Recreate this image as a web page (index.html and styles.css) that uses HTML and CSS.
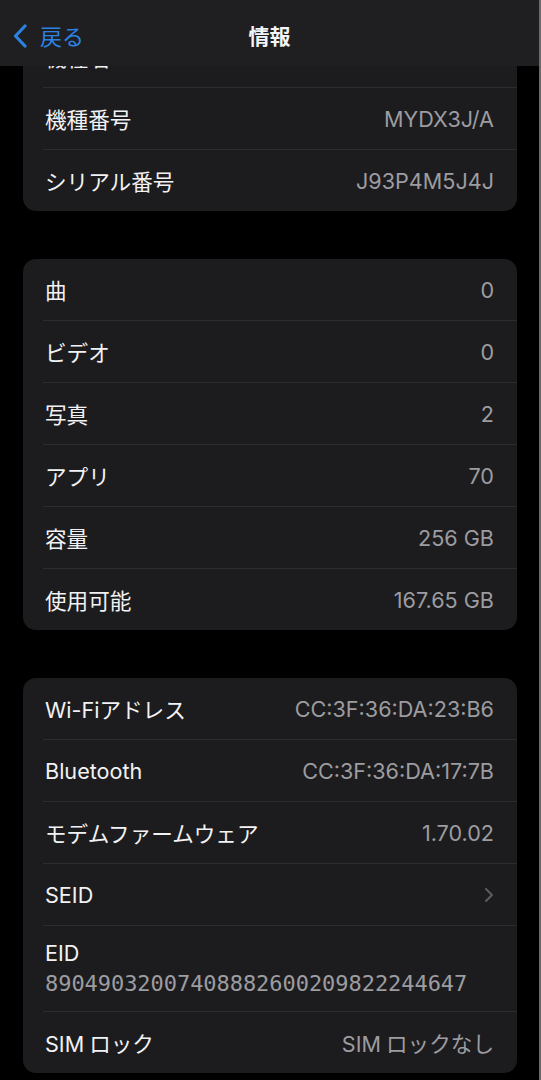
FILE: index.html
```html
<!DOCTYPE html>
<html lang="ja">
<head>
<meta charset="utf-8">
<title>情報</title>
<link rel="stylesheet" href="styles.css">
</head>
<body>
<div class="screen">
  <header class="navbar">
    <a class="back">
      <svg class="back-chevron" width="16" height="24" viewBox="0 0 16 24"><path d="M13 2 L3.5 12 L13 22" fill="none" stroke="currentColor" stroke-width="3.2" stroke-linecap="round" stroke-linejoin="round"/></svg>
      <span>戻る</span>
    </a>
    <div class="title">情報</div>
  </header>
  <main class="content">
    <section class="card">
      <div class="row"><span class="label">機種名</span><span class="value">iPhone 12</span></div>
      <div class="row"><span class="label">機種番号</span><span class="value">MYDX3J/A</span></div>
      <div class="row"><span class="label">シリアル番号</span><span class="value">J93P4M5J4J</span></div>
    </section>
    <section class="card">
      <div class="row"><span class="label">曲</span><span class="value">0</span></div>
      <div class="row"><span class="label">ビデオ</span><span class="value">0</span></div>
      <div class="row"><span class="label">写真</span><span class="value">2</span></div>
      <div class="row"><span class="label">アプリ</span><span class="value">70</span></div>
      <div class="row"><span class="label">容量</span><span class="value">256 GB</span></div>
      <div class="row"><span class="label">使用可能</span><span class="value">167.65 GB</span></div>
    </section>
    <section class="card">
      <div class="row"><span class="label">Wi-Fiアドレス</span><span class="value">CC:3F:36:DA:23:B6</span></div>
      <div class="row"><span class="label">Bluetooth</span><span class="value">CC:3F:36:DA:17:7B</span></div>
      <div class="row"><span class="label">モデムファームウェア</span><span class="value">1.70.02</span></div>
      <div class="row"><span class="label">SEID</span><svg class="chevron" width="10" height="16" viewBox="0 0 10 16"><path d="M2 2 L8 8 L2 14" fill="none" stroke="currentColor" stroke-width="2" stroke-linecap="round" stroke-linejoin="round"/></svg></div>
      <div class="row row-stack"><span class="label">EID</span><span class="mono">89049032007408882600209822244647</span></div>
      <div class="row"><span class="label"><span class="latin">SIM</span>ロック</span><span class="value"><span class="latin">SIM</span>ロックなし</span></div>
    </section>
  </main>
</div>
</body>
</html>
```

FILE: styles.css
```css
* { box-sizing: border-box; }
html, body { margin: 0; padding: 0; background: #000; }
body {
  width: 541px;
  font-family: Inter, "Noto Sans CJK JP", sans-serif;
  color: #f2f2f4;
}
.screen {
  width: 541px;
  min-height: 1080px;
  border-right: 2px solid #6a6a6a;
  background: #000;
}
.navbar {
  position: fixed;
  top: 0;
  left: 0;
  width: 539px;
  height: 66px;
  background: #1f1f21;
  z-index: 10;
  display: flex;
  align-items: center;
  justify-content: center;
}
.back {
  position: absolute;
  left: 12px;
  top: 21px;
  display: flex;
  align-items: center;
  gap: 12px;
  color: #2b82e4;
  font-size: 22px;
  font-family: "Noto Sans CJK JP", sans-serif;
  line-height: 28px;
}
.back-chevron { display: block; margin-top: 1px; }
.title {
  font-size: 21px;
  font-weight: 700;
  font-family: "Noto Sans CJK JP", sans-serif;
  color: #f4f4f6;
  line-height: 28px;
  margin-top: 4px;
}
.content {
  padding: 26px 0 0 23px;
  width: 539px;
  display: flex;
  flex-direction: column;
  gap: 48px;
}
.card {
  width: 494px;
  background: #1c1c1e;
  border-radius: 13px;
  overflow: hidden;
  display: flex;
  flex-direction: column;
}
.row {
  height: 62px;
  margin-left: 20px;
  padding: 0 23px 0 2px;
  border-bottom: 1px solid #2d2d30;
  display: flex;
  align-items: center;
  justify-content: space-between;
}
.row:last-child { height: 61px; border-bottom: none; }
.label {
  font-size: 21.6px;
  color: #f2f2f4;
}
.value {
  font-size: 21.6px;
  color: #9c9ca1;
}
.latin { margin-right: 5px; }
.chevron { color: #5c5c60; display: block; }
.row-stack {
  height: 86px;
  flex-direction: column;
  align-items: flex-start;
  justify-content: center;
  gap: 2px;
}
.row-stack .label { line-height: 28px; }
.mono {
  font-family: "DejaVu Sans Mono", monospace;
  font-size: 22px;
  color: #9c9ca1;
  line-height: 30px;
  letter-spacing: -0.05px;
}
```
